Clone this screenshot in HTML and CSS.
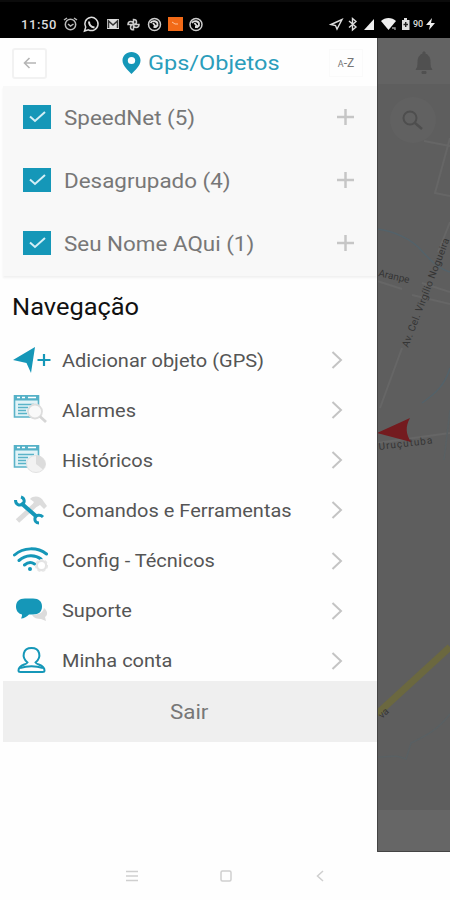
FILE: index.html
```html
<!DOCTYPE html>
<html lang="pt-br">
    <head>
        <title>Gps/Objetos</title>
        <meta charset="utf-8">
        <meta name="viewport" content="width=device-width, initial-scale=1">

        <link rel="stylesheet" href="styles.css">
    </head>

    <body>
        <div class="status">
            <span class="hora">11:50</span>
            <svg class="avisos" width="142" height="18" viewBox="62 15 142 18" fill="none" stroke="#bbb" stroke-width="1.500">
                <circle cx="70.500" cy="24.500" r="5.200"/><path d="M64 20l3-2M77 20l-3-2M68 24l2.500 2 3-2"/>
                <path d="M84.500 31l1.200-3.800a6.600 6.600 0 1 1 2.700 2.600z" stroke="#ddd"/><path d="M89 21.500c0 3.500 2 5.500 5.500 6" stroke="#ddd" stroke-width="2"/>
                <path d="M107 19h12v10h-12z" fill="#ddd" stroke="none"/><path d="M108.500 28v-7l4.500 4 4.500-4v7" stroke="#333"/>
                <path d="M133.500 24.500v-5c4 0 4 5 0 5h5.500c0 4-5.500 4-5.500 0v5.300c-4 0-4-5.300 0-5.300H128c0-4 5.500-4 5.500 0z" stroke="#ccc"/>
                <circle cx="154.500" cy="24.500" r="6" stroke="#ccc"/><path d="M150.500 23c2-3 7-2 7 1 0 2-2 3-4 3M153 23l3 4 2-2" stroke="#ddd" stroke-width="1.800"/>
                <path d="M168 17h15v14h-15z" fill="#f26a17" stroke="none"/><path d="M172 22l3 2 3 0" stroke="#ffc49c" stroke-width="1"/>
                <circle cx="196" cy="24.500" r="6" stroke="#ccc"/><path d="M192 23c2-3 7-2 7 1 0 2-2 3-4 3M194.500 23l3 4 2-2" stroke="#ddd" stroke-width="1.800"/>
            </svg>
            <svg class="sinais" width="83" height="18" viewBox="328 15 83 18" fill="none" stroke="#ddd" stroke-width="1.400">
                <path d="M331 24.500l11-5-5 9.500-1.500-3.500z"/>
                <path d="M349 21l7 6-3.500 3V18.500l3.500 3-7 6"/>
                <path d="M364 30h10V19z" fill="#eee" stroke="none"/>
                <path d="M381 21c4-4 11-4 15 0l-7.500 9z" fill="#eee" stroke="none"/><path d="M392 28h3v2" stroke="#999"/>
                <path d="M402 20h2v-2h3v2h2.500v10H402z" fill="#ddd" stroke="none"/><path d="M405.700 22v5M403.500 24.500h4.500" stroke="#222"/>
            </svg>
            <span class="bateria">90</span>
            <svg width="9" height="12" viewBox="0 0 9 12"><path d="M6 0L0 7h4l-1 5 6-7H5z" fill="#eee"/></svg>
        </div>

        <div class="tela">
            <div class="menu">
                <div class="topo">
                    <button class="voltar">
                        <svg width="14" height="12" viewBox="0 0 14 12" fill="none" stroke="#b5b5b5" stroke-width="1.600"><path d="M13 6H1.500M6.500 1L1.500 6l5 5"/></svg>
                    </button>
                    <div class="titulo">
                        <svg width="19" height="22" viewBox="0 0 19 22"><path fill="#1597b8" fill-rule="evenodd" d="M9.500 0C4.300 0 .5 3.700.5 8.500c0 5.500 6 10 9 13.500 3-3.500 9-8 9-13.500C18.500 3.700 14.700 0 9.500 0zm0 5a3.700 3.500 0 1 1 0 7 3.700 3.500 0 0 1 0-7z"/></svg>
                        <span class="texto">Gps/Objetos</span>
                    </div>
                    <button class="ordenar"><small>A</small>-Z</button>
                </div>

                <div class="grupos">
                    <div class="grupo">
                        <span class="caixa"><svg width="17" height="12" viewBox="0 0 17 12"><path d="M1 5.500l5 4.500L16 1"/></svg></span>
                        <span class="texto">SpeedNet (5)</span>
                        <svg class="mais" width="17" height="16" viewBox="0 0 17 16"><path d="M0 8h17M8.500 0v16"/></svg>
                    </div>
                    <div class="grupo">
                        <span class="caixa"><svg width="17" height="12" viewBox="0 0 17 12"><path d="M1 5.500l5 4.500L16 1"/></svg></span>
                        <span class="texto">Desagrupado (4)</span>
                        <svg class="mais" width="17" height="16" viewBox="0 0 17 16"><path d="M0 8h17M8.500 0v16"/></svg>
                    </div>
                    <div class="grupo">
                        <span class="caixa"><svg width="17" height="12" viewBox="0 0 17 12"><path d="M1 5.500l5 4.500L16 1"/></svg></span>
                        <span class="texto">Seu Nome AQui (1)</span>
                        <svg class="mais" width="17" height="16" viewBox="0 0 17 16"><path d="M0 8h17M8.500 0v16"/></svg>
                    </div>
                </div>

                <h2><span class="texto">Navegação</span></h2>

                <div class="lista">
                    <div class="item">
                        <svg class="icone" viewBox="0 0 38 30"><path d="M0 15L22 2l-4 26-4.500-10z" fill="#1597b8"/><path d="M24.500 15h13M31 9v12" stroke="#1597b8" stroke-width="2.200"/></svg>
                        <span class="texto">Adicionar objeto (GPS)</span>
                        <svg class="seta" width="12" height="18" viewBox="0 0 12 18"><path d="M1.500 1L10 9l-8.500 8"/></svg>
                    </div>
                    <div class="item">
                        <svg class="icone" viewBox="0 0 38 30">
                            <path d="M1.500 0h24v22h-24z" fill="#e2f3f7" stroke="#5ab3c8" stroke-width="1.600"/><path d="M1 0h25v5.500H1z" fill="#55b1c7"/>
                            <path d="M4 2.500h3M9 2.500h3M15 2.500h8" stroke="#fff" stroke-width="1.500"/>
                            <path d="M5 9.500h16M5 12.500h10M5 15.500h8M5 18.500h9" stroke="#5ab3c8" stroke-width="1.500"/>
                            <circle cx="22" cy="16.500" r="7" fill="#f9f9f9" stroke="#ddd" stroke-width="1.800"/><path d="M27 21.500l6 5.500" stroke="#d6d6d6" stroke-width="2.800"/>
                        </svg>
                        <span class="texto">Alarmes</span>
                        <svg class="seta" width="12" height="18" viewBox="0 0 12 18"><path d="M1.500 1L10 9l-8.500 8"/></svg>
                    </div>
                    <div class="item">
                        <svg class="icone" viewBox="0 0 38 30">
                            <path d="M1.500 0h24v22h-24z" fill="#e2f3f7" stroke="#5ab3c8" stroke-width="1.600"/><path d="M1 0h25v5.500H1z" fill="#55b1c7"/>
                            <path d="M4 2.500h3M9 2.500h3M15 2.500h8" stroke="#fff" stroke-width="1.500"/>
                            <path d="M5 9.500h16M5 12.500h10M5 15.500h8M5 18.500h9" stroke="#5ab3c8" stroke-width="1.500"/>
                            <ellipse cx="23" cy="19" rx="9.500" ry="8.500" fill="#f2f2f2" stroke="#e2e2e2"/><path d="M23 19v-8.500a9.500 8.500 0 0 1 7 14z" fill="#dcdcdc"/>
                        </svg>
                        <span class="texto">Históricos</span>
                        <svg class="seta" width="12" height="18" viewBox="0 0 12 18"><path d="M1.500 1L10 9l-8.500 8"/></svg>
                    </div>
                    <div class="item">
                        <svg class="icone" viewBox="0 0 38 30" fill="none">
                            <path d="M4.500 26L21 11" stroke="#dcdcdc" stroke-width="5"/><path d="M17 4c4-4 11-3 14 3l3 4-3 3-4-4-5 3-3-3 2-3z" fill="#dcdcdc"/>
                            <path d="M8 8l16 14" stroke="#1597b8" stroke-width="4"/>
                            <path d="M2.500 5c0 5 4 6 7.500 4 2-2 1.500-6-2-7M30 22c-3-3-7-2-8 1-.5 3 1 5 4 5" stroke="#1597b8" stroke-width="3"/>
                        </svg>
                        <span class="texto">Comandos e Ferramentas</span>
                        <svg class="seta" width="12" height="18" viewBox="0 0 12 18"><path d="M1.500 1L10 9l-8.500 8"/></svg>
                    </div>
                    <div class="item">
                        <svg class="icone" viewBox="0 0 38 30" fill="none" stroke="#1597b8" stroke-width="3" stroke-linecap="round">
                            <path d="M1.500 9c9-8 23-8 32-1M6 14.500c7-6 16-6 22-1.500M11.500 19c3-2.500 7-3 10-1"/><circle cx="17" cy="23" r="2" fill="#1597b8" stroke="none"/>
                            <circle cx="28.500" cy="19.500" r="5.800" fill="#e3e3e3" stroke="#e6e6e6" stroke-width="1.500" stroke-dasharray="3 2" stroke-linecap="butt"/><circle cx="28.500" cy="19.500" r="3.500" fill="#fff" stroke="none"/>
                        </svg>
                        <span class="texto">Config - Técnicos</span>
                        <svg class="seta" width="12" height="18" viewBox="0 0 12 18"><path d="M1.500 1L10 9l-8.500 8"/></svg>
                    </div>
                    <div class="item">
                        <svg class="icone" viewBox="0 0 38 30">
                            <path d="M31 12c4 3 4 7 1 9l1 4-5-2c-4 0-7-1-9-4 6 0 11-2 12-7z" fill="#dcdcdc"/>
                            <path d="M12 2.500h8c6 0 9 3 9 8s-3 8-9 8h-4c-2 2-5 4-8 4 1-2 1-3 1-4-4-1-6-4-6-8 0-5 3-8 9-8z" fill="#1597b8"/>
                        </svg>
                        <span class="texto">Suporte</span>
                        <svg class="seta" width="12" height="18" viewBox="0 0 12 18"><path d="M1.500 1L10 9l-8.500 8"/></svg>
                    </div>
                    <div class="item">
                        <svg class="icone" viewBox="0 0 38 30" fill="none" stroke="#1597b8" stroke-width="2">
                            <path d="M14.500 16.500C8 11 10 2 18.500 2S29 11 22.500 16.500c1 2.500 9 2 9 8 0 1.200-.8 1.500-2 1.500h-22c-1.200 0-2-.3-2-1.500 0-6 8-5.500 9-8z"/><path d="M7 22c7-2 16-2 23 0"/>
                        </svg>
                        <span class="texto">Minha conta</span>
                        <svg class="seta" width="12" height="18" viewBox="0 0 12 18"><path d="M1.500 1L10 9l-8.500 8"/></svg>
                    </div>
                </div>

                <button class="sair"><span class="texto">Sair</span></button>
            </div>

            <svg class="mapa" width="73" height="814" viewBox="377 38 73 814">
                <path d="M377 38h73v814h-73z" fill="#5e5e5e"/>
                <path d="M377 38h73v46h-73z" fill="#636363"/>
                <path d="M377 810h73v42h-73z" fill="#666"/>
                <path d="M416 69.500h16c-2-2-2-4-2-8 0-4-2-7-5-7.500v-2h-2v2c-3 .5-5 3.500-5 7.500 0 4 0 6-2 8zM422 71.500h4v2h-4z" fill="#505050" stroke="#505050"/>

                <g fill="none" stroke="#666" stroke-width="2">
                    <path d="M450 138L435 193l15 3M424 141l26 5M450 222l-12 30M402 348L380 408M422 283l28 9M412 295l38 9M377 281l25 8M377 443l73-10"/>
                </g>
                <g fill="none" stroke="#53626a" stroke-width="1.500">
                    <path d="M377 229c17 2 34 10 44 21s18 19 29 22M450 368c-5 17-14 25-28 35"/>
                </g>
                <path d="M450 410l-6 50M377 757c14 0 18-3 29 2l5-16c14-7 27-13 39-29" fill="none" stroke="#596063" stroke-width="1.500"/>
                <circle cx="413" cy="120" r="23" fill="#616161"/>
                <circle cx="410" cy="118" r="6.500" fill="none" stroke="#4e4e4e" stroke-width="2"/><path d="M415 123l7 6" stroke="#4e4e4e" stroke-width="2.500"/>

                <path d="M377 714l73-67" stroke="#6b683f" stroke-width="7"/>
                <g class="ruas">
                    <text transform="translate(378 276) rotate(13)">Aranpe</text>
                    <text transform="translate(408 348) rotate(-69)" textLength="116">Av. Cel. Virgílio Nogueira</text>
                    <text transform="translate(379 450) rotate(-7)" textLength="54">Uruçutuba</text>
                    <text transform="translate(382 719) rotate(-43)">va</text>
                </g>
                <path d="M377 433l33-15c-5 9-4 16 1 24z" fill="#741b1f"/>
                <path d="M377.500 38v813.500H450" fill="none" stroke="#444"/>
            </svg>
        </div>

        <div class="navbar">
            <svg width="12" height="12" viewBox="0 0 12 12"><path d="M0 1.500h12M0 6h12M0 10.500h12"/></svg>
            <svg width="12" height="12" viewBox="0 0 12 12"><rect x="1" y="1" width="10" height="10" rx="1.500"/></svg>
            <svg width="12" height="12" viewBox="0 0 12 12"><path d="M9 1L3.500 6 9 11"/></svg>
        </div>
    </body>
</html>
```
FILE: styles.css
```css
*, *::before, *::after{
    box-sizing: border-box;
    font-family: Roboto, sans-serif;
}

body{
    margin: 0;
    width: 450px;
    height: 900px;
    overflow: hidden;
    background: #fefefe;
}

button{
    border: 0;
    padding: 0;
    cursor: pointer;
}

svg{
    flex-shrink: 0;
}

/* letras mais largas em toda a tela */
.texto{
    display: inline-block;
    white-space: nowrap;
    transform: scaleX(1.12);
    transform-origin: left;
}

.status{
    display: flex;
    align-items: center;
    height: 38px;
    padding: 8px 15px 0 21px;
    background: #000;
    border-top: 2px solid #0b0b0b;
    color: #ddd;
}

.hora{
    width: 41px;
    font-size: 13px;
    font-weight: 500;
    letter-spacing: .6px;
}

.sinais{
    margin-left: auto;
}

.bateria{
    width: 13px;
    margin-left: 2px;
    font-size: 9px;
    font-weight: 500;
}

.tela{
    display: flex;
    height: 814px;
}

.menu{
    width: 377px;
    padding-left: 3px;
    background: #fefefe;
}

.topo{
    display: flex;
    align-items: center;
    height: 48px;
    padding: 2px 13px 0 9px;
}

.voltar{
    display: flex;
    align-items: center;
    justify-content: center;
    width: 35px;
    height: 31px;
    background: #fff;
    border: 2px solid #f2f2f2;
    border-radius: 3px;
}

.titulo{
    display: flex;
    align-items: center;
    gap: 7px;
    width: 160px;
    margin-left: 75px;
    font-size: 21px;
    color: #2a9dbb;
}

.ordenar{
    width: 34px;
    height: 28px;
    margin-left: 47px;
    background: #fefefe;
    border: 1px solid #fafafa;
    font-size: 12px;
    color: #777;
}

.ordenar small{
    font-size: 9px;
}

.grupos{
    height: 190px;
    background: #f8f8f8;
    box-shadow: 0 2px 2px #f1f1f1;
}

.grupo{
    display: flex;
    align-items: center;
    height: 63px;
    padding: 0 23px 0 20px;
    font-size: 20px;
    color: #777;
}

.caixa{
    display: flex;
    align-items: center;
    justify-content: center;
    width: 28px;
    height: 24px;
    margin-right: 13px;
    margin-bottom: 1px;
    background: #1597b8;
}

.caixa path{
    fill: none;
    stroke: #d4eff6;
    stroke-width: 2;
}

.mais{
    margin-left: auto;
    margin-bottom: 1px;
}

.mais path{
    stroke: #c6c6c6;
    stroke-width: 2.5;
}

h2{
    margin: 0;
    padding: 18px 0 0 9px;
    height: 59px;
    font-size: 23px;
    font-weight: 400;
    line-height: 27px;
    color: #111;
}

h2 .texto{
    transform: scaleX(1.105);
}

.lista{
    height: 346px;
    overflow: hidden;
}

.item{
    display: flex;
    align-items: center;
    height: 50.15px;
    padding: 0 34px 0 10px;
    font-size: 18px;
    color: #555;
}

.item .texto{
    transform: scaleX(1.11);
}

.icone{
    width: 38px;
    height: 30px;
    margin-right: 11px;
}

.seta{
    margin-left: auto;
}

.seta path{
    fill: none;
    stroke: #c4c4c4;
    stroke-width: 2;
}

.sair{
    display: block;
    width: 100%;
    height: 61px;
    padding-right: 2px;
    background: #efefef;
    font-size: 20px;
    color: #777;
}

.sair .texto{
    transform-origin: center;
}

.ruas text{
    font-size: 10px;
    fill: #353535;
}

.navbar{
    display: flex;
    justify-content: center;
    align-items: center;
    gap: 82px;
    height: 48px;
    padding-left: 2px;
}

.navbar path, .navbar rect{
    fill: none;
    stroke: #cfcfcf;
    stroke-width: 1.5;
}
```
